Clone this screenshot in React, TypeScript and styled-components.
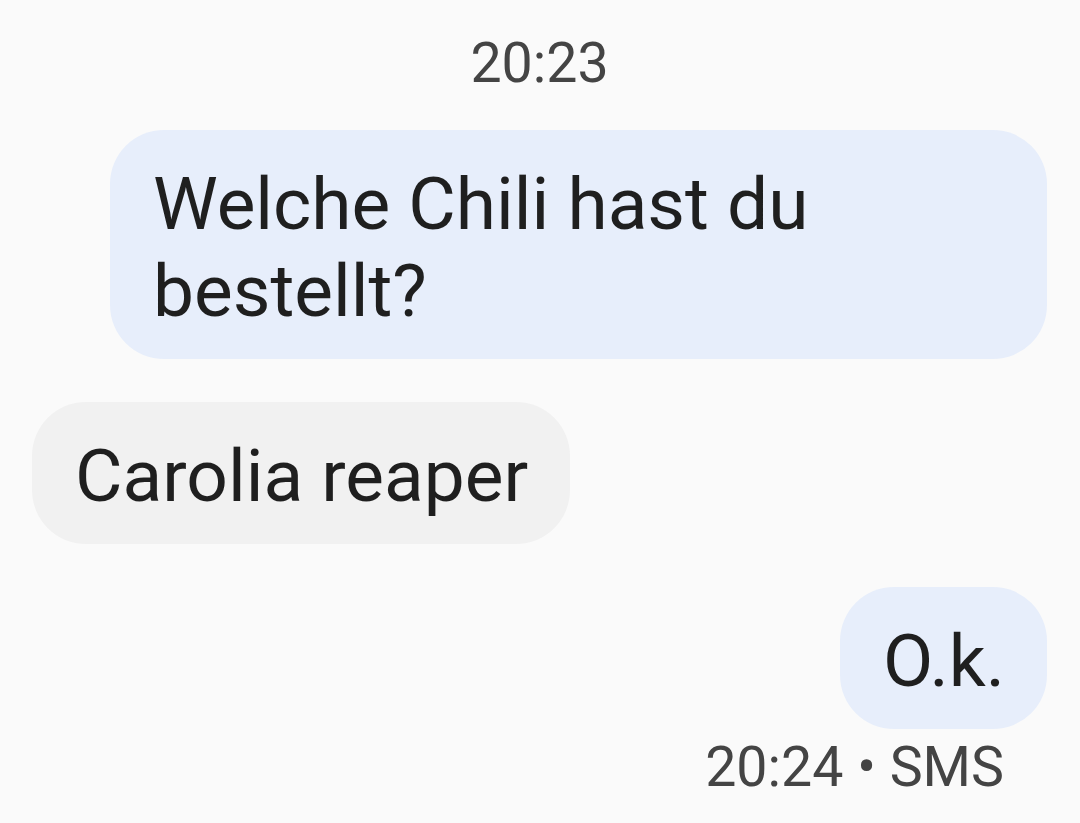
import React from 'react'
import styled, { createGlobalStyle } from 'styled-components'

const GlobalStyle = createGlobalStyle`
	html, body {
		margin: 0;
		padding: 0;
		background-color: #fafafa;
	}
	body {
		font-family: Roboto, "Noto Sans", sans-serif;
		-webkit-font-smoothing: antialiased;
	}
`

const Thread = styled.div`
	width: 1080px;
	height: 823px;
	box-sizing: border-box;
	padding: 32px 33px 0 32px;
	display: flex;
	flex-direction: column;
	background-color: #fafafa;
	overflow: hidden;
`

const TimeStamp = styled.div`
	text-align: center;
	font-size: 55.5px;
	line-height: 64px;
	color: #444444;
	margin-bottom: 34px;
`

const MessageList = styled.div`
	display: flex;
	flex-direction: column;
	gap: 43px;
`

const Row = styled.div<{ $out?: boolean }>`
	display: flex;
	justify-content: ${p => (p.$out ? 'flex-end' : 'flex-start')};
`

const Bubble = styled.div<{ $out?: boolean }>`
	max-width: 937px;
	box-sizing: border-box;
	padding: 31px 42px 24px 43px;
	border-radius: 54px;
	background-color: ${p => (p.$out ? '#e7eefb' : '#f1f1f1')};
	color: #1f1f1f;
	font-size: 73px;
	line-height: 87px;
`

const Meta = styled.div`
	text-align: right;
	padding-right: 43px;
	margin-top: 7px;
	font-size: 55.5px;
	line-height: 64px;
	color: #444444;
`

type Message = { text: string, out: boolean }

const messages: Message[] = [
	{ text: 'Welche Chili hast du bestellt?', out: true },
	{ text: 'Carolia reaper', out: false },
	{ text: 'O.k.', out: true },
]

export default function App() {
	return <>
		<GlobalStyle />
		<Thread>
			<TimeStamp>20:23</TimeStamp>
			<MessageList>
				{messages.map((m, i) =>
					<Row key={i} $out={m.out}>
						<Bubble $out={m.out}>{m.text}</Bubble>
					</Row>
				)}
			</MessageList>
			<Meta>20:24 • SMS</Meta>
		</Thread>
	</>
}
